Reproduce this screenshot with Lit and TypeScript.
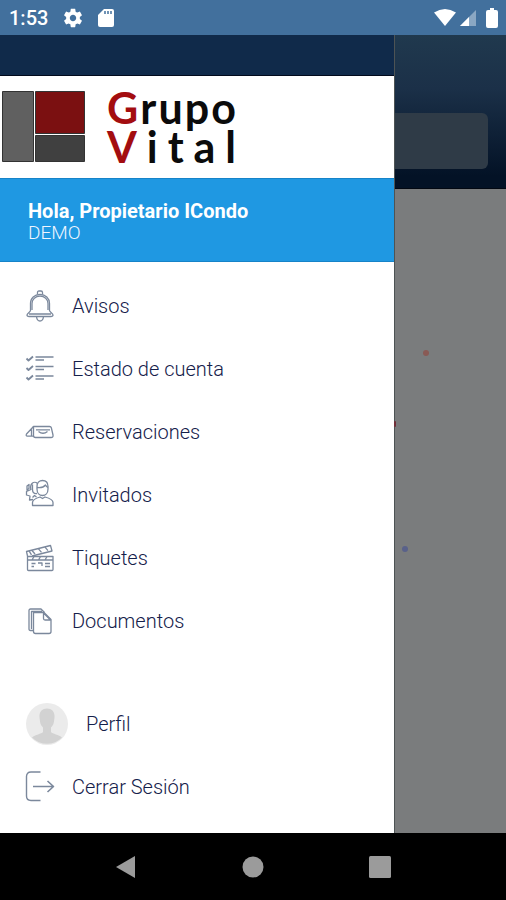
import { LitElement, html, css, svg } from "lit";
import { customElement } from "lit/decorators.js";

const line = (body: unknown) => html`
  <svg class="icon" viewBox="0 0 32 32" width="32" height="32" aria-hidden="true">${body}</svg>
`;

const icons = {
  bell: line(svg`
    <path d="M13.500 4.500v-2q0-1.500 1.500-1.500h2q1.500 0 1.500 1.500v2"/>
    <path d="M6.500 20.500V13.500C6.500 8 10.500 4.500 16 4.500S25.500 8 25.500 13.500V20.500c0 1.500 3.500 2.500 3.500 4.500 0 1.200-1 1.500-2.200 1.500H5.200C4 26.500 3 26.200 3 25c0-2 3.500-3 3.500-4.500z"/>
    <path d="M8 20V13.500C8 9 11.500 6.200 16 6.200S24 9 24 13.500V20"/>
    <path d="M5 24h22M12.500 26.500c.3 3 1.500 4.500 3.500 4.500s3.200-1.500 3.500-4.500"/>`),
  checks: line(svg`
    <path d="M2.500 5.500l2 2 4.500-4M2.500 15l2 2 4.500-4M2.500 24.500l2 2 4.500-4" stroke-width="1.800"/>
    <path d="M11.500 4H29.500M11.500 13.500H29.500M11.500 23H29.500"/>
    <path d="M11.500 7H20M11.500 16.500H20M11.500 26H20"/>`),
  table: line(svg`
    <path d="M9.500 10.500H25.500q1.500 0 1.800 1.200L29 19q.5 2.500-2 2.500H11.500q-2 0-2-2z"/>
    <path d="M9.500 10.500L2.500 18q-1 2 1 2.200H9.500M7.500 13.500V20"/>
    <path d="M12 13.800H26M14.500 15.500q4.500 3.500 9 0"/>`),
  guests: line(svg`
    <path d="M13 7.500c0-4 2.500-6 5.500-6S24 3.500 24 7.500v2.500c0 4-2.500 6.500-5.500 6.500S13 14 13 10z"/>
    <path d="M13 8.500c4 .5 7-.5 8.500-2.500.8 1.500 1.500 2 2.500 2.500"/>
    <path d="M8.500 26.500v-3c0-3 3-4.200 7.500-5.500l2.500 1.500 2.500-1.500c4.500 1.300 8 2.500 8 5.500v3z"/>
    <path d="M13.500 4.500c-1.500-1.500-4-1.500-5.500 0-1.500 1.500-1.500 4.500-1 6.500M8.500 5.500v5c0 3 1.500 4.500 4.500 4M7 10.500l-4.500 2V16l3.500 1-.5 4 3.500-.5M3 7l2-1.500v4l-2 1.500zM8.500 18.500l2-2 2 1.500"/>`),
  clapper: line(svg`
    <path d="M3.500 14.500H29V27.500q0 1-1 1H4.500q-1 0-1-1z"/>
    <path d="M3.500 18H29M10 14.500l-2 3.500M16.500 14.500L14.500 18M23 14.500L21 18"/>
    <path d="M3.500 14L2.500 9.500 26.500 3.500l1.500 5.500-20 5"/>
    <path d="M8 8.500l3 3.500M14.500 6.800l3 3.500M21 5.200l3 3.500M5 8.800l2.500 4"/>
    <path d="M7.500 21.500h4M7.500 24.500h2.500M14 21h4v3M21 21.500h5M21 24.500h5"/>`),
  docs: line(svg`
    <path d="M9.500 7.500H20l7 7V26.500q0 2-2 2H11.500q-2 0-2-2z"/>
    <path d="M19.500 8v5.500q0 1.500 1.500 1.500H26.500z"/>
    <path d="M9 25.500H6.500q-1.500 0-1.500-1.500V5.500Q5 4 6.500 4H17l3.500 3.500M7.500 24V6.500H18"/>`),
  exit: line(svg`
    <path d="M16.500 1H7Q2.500 1 2.500 5.500V25Q2.500 29.500 7 29.500H16.500" stroke-width="1.400"/>
    <path d="M9 15.500H29.500M23.500 10L29.500 15.500 23.500 21" stroke-width="1.600"/>`),
  avatar: html`
    <svg class="avatar" viewBox="0 0 42 42" width="42" height="42" aria-hidden="true">
      <circle cx="21" cy="21" r="21" fill="#ebebeb"/>
      <path fill="#d2d2d2" d="M21 5.500c-5 0-8 3.500-7.500 9l.5 4c.3 2.500 1.500 4.500 3 6v4.500c-1.500 2-8 2.500-11 5.500a21 21 0 0 0 30 0c-3-3-9.500-3.500-11-5.500v-4.500c1.500-1.500 2.700-3.500 3-6l.5-4c.5-5.500-2.500-9-7.500-9z"/>
    </svg>`,
};

const sections = [
  { label: "Avisos", icon: icons.bell },
  { label: "Estado de cuenta", icon: icons.checks },
  { label: "Reservaciones", icon: icons.table },
  { label: "Invitados", icon: icons.guests },
  { label: "Tiquetes", icon: icons.clapper },
  { label: "Documentos", icon: icons.docs },
];

@customElement("app-root")
export class AppRoot extends LitElement {
  static styles = css`
    :host {
      display: flex;
      flex-direction: column;
      min-height: 100vh;
      font-family: Roboto, sans-serif;
      color: #14204a;
    }
    * { box-sizing: border-box; }
    svg { display: block; flex: none; }
    .status {
      display: flex;
      align-items: center;
      justify-content: space-between;
      height: 35px;
      padding: 0 8px 0 9px;
      background: #42709d;
      color: #fff;
      font-size: 20px;
      line-height: 24px;
      font-weight: 500;
    }
    .group { display: flex; align-items: center; }
    .notices { gap: 14px; }
    .signals { gap: 4px; }
    .battery { margin-left: 6px; }
    .stage { flex: 1; display: grid; grid-template-columns: 7fr 2fr; }
    .drawer { background: #fff; }
    .strip { height: 41px; background: #102a4a; border-bottom: 1px solid #020a1c; }
    .brand {
      display: flex;
      align-items: center;
      gap: 22px;
      height: 102px;
      padding: 0 1px;
    }
    .wordmark {
      width: 129px;
      font-family: Lato, sans-serif;
      font-weight: 700;
      font-size: 43px;
      line-height: 39px;
      color: #0b0b0b;
    }
    .row { display: flex; justify-content: space-between; }
    .initial { color: #a30d10; }
    .user {
      height: 84px;
      padding: 21px 28px;
      background: #1f98e2;
      border-top: 1px solid #1683c8;
      border-bottom: 1px solid #1683c8;
      color: #fff;
      font-size: 20px;
      line-height: 22px;
    }
    .name { font-weight: 700; }
    .unit { color: #eef5ff; font-size: 19px; font-weight: 300; }
    .list { list-style: none; margin: 0; padding: 12px 0 0; }
    .account { padding: 40px 0 15px; }
    .item {
      display: flex;
      align-items: center;
      gap: 16px;
      height: 63px;
      padding: 0 24px;
      color: inherit;
      text-decoration: none;
      font-size: 20px;
      line-height: 24px;
      font-weight: 300;
    }
    .icon { fill: none; stroke: #7b889c; stroke-width: 1.3; stroke-linejoin: round; }
    .profile { gap: 18px; padding-left: 26px; }
    .behind {
      position: relative;
      display: flex;
      flex-direction: column;
      background: #7a7c7d;
      border-left: 1px solid #4d5354;
    }
    .header {
      height: 154px;
      padding: 78px 18px 19px 0;
      background: linear-gradient(#20394e, #1b3048 35%, #031226 92%);
      border-bottom: 1px solid #020812;
    }
    .card { height: 56px; border-radius: 0 6px 6px 0; background: #2f3b47; }
    .dot { position: absolute; width: 6px; height: 6px; border-radius: 3px; }
    .one { left: 28px; top: 315px; background: #895a55; }
    .two { left: 7px; top: 511px; background: #59618a; }
    .three { left: -1px; top: 386px; width: 2px; background: #702f38; }
    .nav {
      display: flex;
      justify-content: center;
      gap: 103px;
      height: 67px;
      background: #000;
    }
    .key {
      display: flex;
      align-items: center;
      justify-content: center;
      width: 24px;
      padding: 0;
      border: 0;
      background: none;
    }
  `;

  private entry(label: string, icon: unknown, kind = "") {
    return html`<li><a class="item ${kind}" href="#">${icon}<span>${label}</span></a></li>`;
  }

  private word(text: string) {
    return html`<div class="row">
      ${[...text].map((c, i) => html`<span class=${i === 0 ? "initial" : ""}>${c}</span>`)}
    </div>`;
  }

  render() {
    return html`
      <header class="status">
        <div class="group notices">
          <span>1:53</span>
          <svg width="22" height="22" viewBox="0 0 24 24" fill="#fff"><path d="M19.430 12.980c.04-.32.07-.64.07-.98s-.03-.66-.07-.98l2.110-1.650c.19-.15.24-.42.12-.64l-2-3.460c-.12-.22-.39-.3-.61-.22l-2.490 1c-.52-.4-1.080-.73-1.690-.98l-.38-2.650C14.460 2.180 14.250 2 14 2h-4c-.25 0-.46.18-.49.42l-.38 2.650c-.61.25-1.170.59-1.690.98l-2.490-1c-.23-.09-.49 0-.61.22l-2 3.460c-.13.22-.07.49.12.64l2.110 1.650c-.04.32-.07.65-.07.98s.03.66.07.98l-2.110 1.650c-.19.15-.24.42-.12.64l2 3.460c.12.22.39.3.61.22l2.490-1c.52.4 1.080.73 1.690.98l.38 2.650c.03.24.24.42.49.42h4c.25 0 .46-.18.49-.42l.38-2.650c.61-.25 1.170-.59 1.690-.98l2.490 1c.23.09.49 0 .61-.22l2-3.460c.12-.22.07-.49-.12-.64l-2.110-1.650zM12 15.500c-1.930 0-3.500-1.570-3.500-3.500s1.570-3.500 3.500-3.500 3.500 1.570 3.500 3.500-1.570 3.500-3.500 3.500z"/></svg>
          <svg width="16" height="20" viewBox="0 0 16 20"><path fill="#fff" d="M6 1h8q2 0 2 2v14q0 2-2 2H2q-2 0-2-2V7z"/><path stroke="#42709d" stroke-width="1.500" d="M7 3v3M10 3v3M13 3v3"/></svg>
        </div>
        <div class="group signals">
          <svg width="22" height="17" viewBox="0 0 22 17"><path fill="#fff" d="M0 3.500Q11-3.500 22 3.500L11 17z"/></svg>
          <svg width="16" height="16" viewBox="0 0 16 16"><path fill="#8aa7c3" d="M16 0v16H0z"/><path fill="#fff" d="M9 7v9H0z"/></svg>
          <svg class="battery" width="12" height="20" viewBox="0 0 12 20"><path fill="#fff" d="M4 0h4v2h2q2 0 2 2v14q0 2-2 2H2q-2 0-2-2V4q0-2 2-2h2z"/></svg>
        </div>
      </header>
      <main class="stage">
        <nav class="drawer">
          <div class="strip"></div>
          <div class="brand">
            <svg width="84" height="72" viewBox="0 0 84 72" stroke="#333" stroke-width="1">
              <path fill="#606060" d="M1.500.5h31v70h-31z"/>
              <path fill="#7b1011" d="M34.500.5h49v42h-49z"/>
              <path fill="#404040" d="M34.500 44.500h49v26h-49z"/>
            </svg>
            <div class="wordmark">${this.word("Grupo")}${this.word("Vital")}</div>
          </div>
          <div class="user">
            <div class="name">Hola, Propietario ICondo</div>
            <div class="unit">DEMO</div>
          </div>
          <ul class="list">${sections.map((s) => this.entry(s.label, s.icon))}</ul>
          <ul class="list account">
            ${this.entry("Perfil", icons.avatar, "profile")}
            ${this.entry("Cerrar Sesión", icons.exit)}
          </ul>
        </nav>
        <div class="behind">
          <div class="header"><div class="card"></div></div>
          <span class="dot one"></span><span class="dot two"></span><span class="dot three"></span>
        </div>
      </main>
      <footer class="nav">
        <button class="key" aria-label="Atrás"><svg width="24" height="24" viewBox="0 0 24 24"><path fill="#9b9b9b" d="M2 12L21 1v22z"/></svg></button>
        <button class="key" aria-label="Inicio"><svg width="24" height="24" viewBox="0 0 24 24"><circle cx="12" cy="12" r="10.500" fill="#9b9b9b"/></svg></button>
        <button class="key" aria-label="Recientes"><svg width="24" height="24" viewBox="0 0 24 24"><rect x="1" y="1" width="22" height="22" rx="1.500" fill="#9b9b9b"/></svg></button>
      </footer>
    `;
  }
}
